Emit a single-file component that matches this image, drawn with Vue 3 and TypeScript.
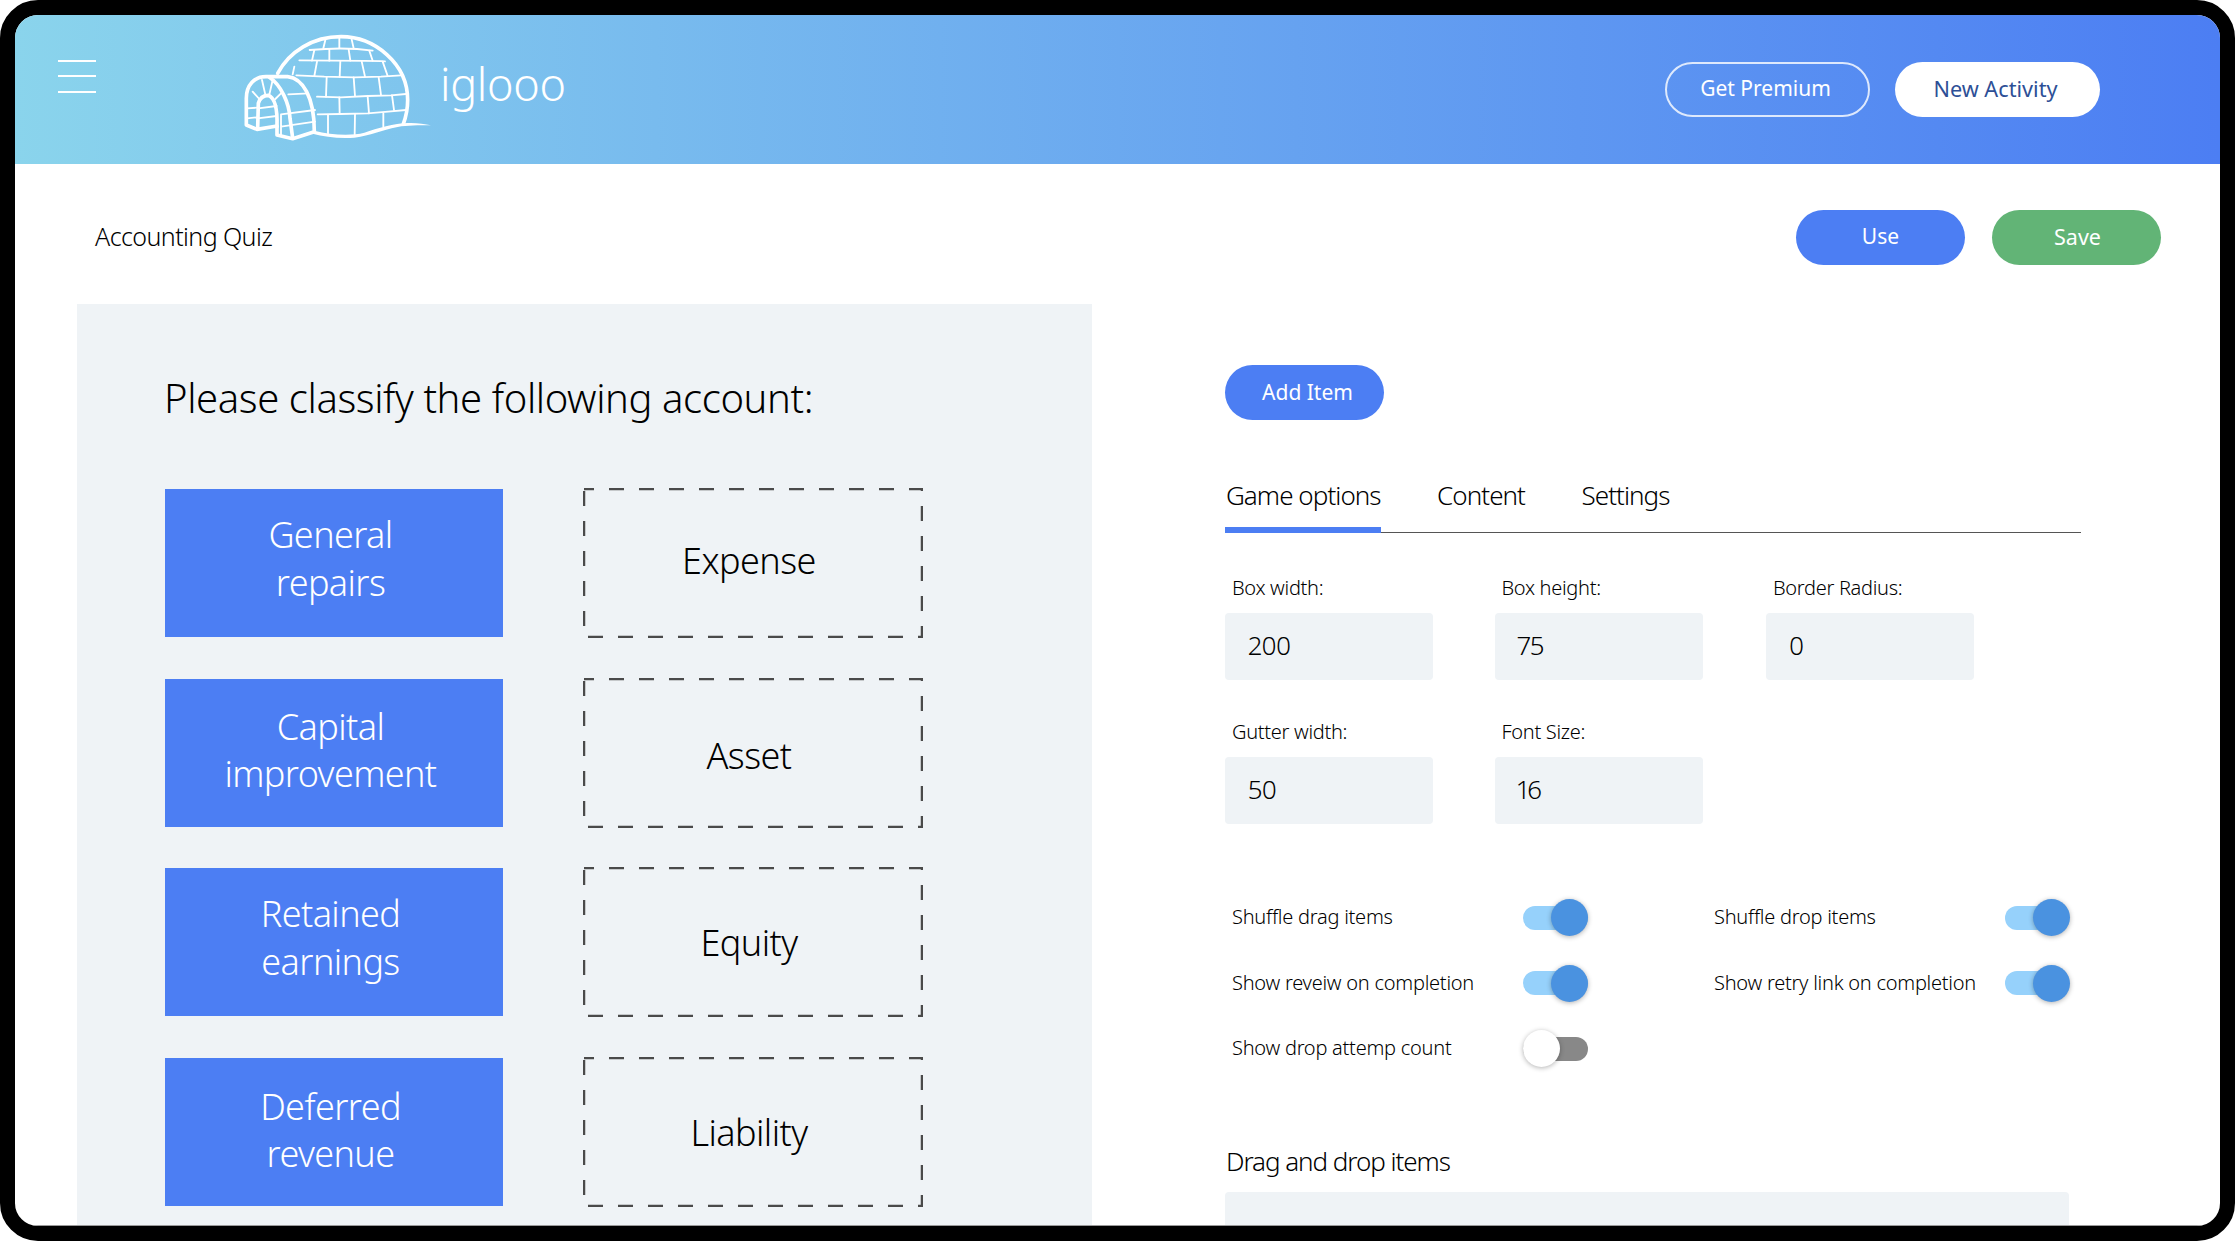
<script setup lang="ts">
const pairs = [
  { item: ['General', 'repairs'], zone: 'Expense', itemPad: 22, zoneTop: 0, zoneBottom: 6 },
  { item: ['Capital', 'improvement'], zone: 'Asset', itemPad: 24, zoneTop: 5, zoneBottom: 0 },
  { item: ['Retained', 'earnings'], zone: 'Equity', itemPad: 22, zoneTop: 1, zoneBottom: 0 },
  { item: ['Deferred', 'revenue'], zone: 'Liability', itemPad: 25, zoneTop: 1, zoneBottom: 0 },
]
const tabs = ['Game options', 'Content', 'Settings']
const fields = [
  { label: 'Box width:', value: '200' },
  { label: 'Box height:', value: '75' },
  { label: 'Border Radius:', value: '0' },
  { label: 'Gutter width:', value: '50' },
  { label: 'Font Size:', value: '16' },
]
const toggles = [
  { label: 'Shuffle drag items', on: true },
  { label: 'Shuffle drop items', on: true },
  { label: 'Show reveiw on completion', on: true },
  { label: 'Show retry link on completion', on: true },
  { label: 'Show drop attemp count', on: false },
]
</script>

<template>
  <div class="frame">
    <header class="header">
      <div class="burger"><i></i><i></i><i></i></div>
      <svg class="logo" viewBox="0 0 660 390" fill="none" stroke="#fff" stroke-linecap="round" stroke-linejoin="round">
        <g stroke-width="11">
          <path d="M140 160C175 95 245 50 330 50C430 50 530 130 530 240C530 265 525 290 517 312" />
          <path d="M46 315V235C46 195 70 170 105 170H170C215 175 250 230 250 335L185 356L138 345V318L78 328L46 315Z" />
          <path d="M115 172C150 195 175 250 177 295L185 354" />
          <path d="M80 325L82 250C87 232 100 226 112 226C128 232 140 255 138 320" />
        </g>
        <path d="M250 332C300 345 360 348 400 338C440 325 490 310 530 309C555 308 580 311 600 316C560 316 530 316 500 321C450 331 420 346 370 353C320 356 280 350 245 341Z" fill="#fff" stroke="none" />
        <g stroke-width="5.5">
          <path d="M236 90C300 84 370 84 425 92" />
          <path d="M205 121L300 122C360 122 420 122 462 124" />
          <path d="M196 166L280 170L370 172L450 170L510 166" />
          <path d="M258 230L330 232L410 228L480 226L525 222" />
          <path d="M260 283L330 282L410 280L480 274L525 270" />
          <path d="M283 60L277 85M325 55V84M362 58L368 85" />
          <path d="M250 90L243 122M295 88V122M353 88L358 122M415 92L425 122" />
          <path d="M258 125L250 168M328 124L326 170M392 124L402 170M455 125L470 168" />
          <path d="M190 140L185 163" />
          <path d="M287 172L285 230M368 172L372 228M443 172L450 225" />
          <path d="M325 232L326 282M410 230L414 280M483 226L489 270" />
          <path d="M291 285V340M372 283L371 346M457 280V320" />
          <path d="M65 215L85 237M93 180L103 224M125 180L115 224M150 220L133 237" />
          <path d="M48 265L78 263M48 295L78 292M82 265L137 258M80 295L137 288" />
          <path d="M172 223L232 220M150 283L252 270M150 320L252 305M150 285V345" />
        </g>
      </svg>
      <span class="brand">iglooo</span>
      <button class="pill ghost">Get Premium</button>
      <button class="pill white">New Activity</button>
    </header>

    <div class="titlebar">
      <span class="doc-title">Accounting Quiz</span>
      <button class="pill blue use">Use</button>
      <button class="pill green">Save</button>
    </div>

    <main class="main">
      <section class="preview">
        <h1 class="question">Please classify the following account:</h1>
        <div class="pairs">
          <template v-for="p in pairs" :key="p.zone">
            <div class="item" :style="{ paddingTop: p.itemPad + 'px' }">{{ p.item[0] }}<br />{{ p.item[1] }}</div>
            <div class="zone" :style="{ paddingTop: p.zoneTop + 'px', paddingBottom: p.zoneBottom + 'px' }">
              <svg class="dash" viewBox="0 0 340 150" fill="none">
                <rect x="1" y="1" width="338" height="148" stroke="#4a4a4a" stroke-width="2.5" stroke-dasharray="15 15" stroke-dashoffset="5" />
              </svg>
              {{ p.zone }}
            </div>
          </template>
        </div>
      </section>

      <section class="options">
        <button class="pill blue add">Add Item</button>
        <nav class="tabs">
          <span v-for="(t, i) in tabs" :key="t" class="tab" :class="{ active: i === 0 }">{{ t }}</span>
        </nav>
        <div class="fields">
          <label v-for="f in fields" :key="f.label" class="field">
            <span class="field-label">{{ f.label }}</span>
            <span class="input">{{ f.value }}</span>
          </label>
        </div>
        <div class="toggles">
          <div v-for="t in toggles" :key="t.label" class="toggle-row">
            <span class="toggle-label">{{ t.label }}</span>
            <span class="switch" :class="{ on: t.on }"><b></b></span>
          </div>
        </div>
        <h2 class="section-title">Drag and drop items</h2>
        <div class="items-box"></div>
      </section>
    </main>
  </div>
</template>

<style>
html, body { background: #fff; margin: 0; }
</style>

<style scoped>
.frame {
  box-sizing: border-box;
  width: 2235px;
  height: 1241px;
  border: 15px solid #000;
  border-radius: 38px;
  overflow: hidden;
  background: #fff;
  display: flex;
  flex-direction: column;
  font-family: "Noto Sans", sans-serif;
  font-weight: 300;
  color: #000;
}
.header {
  flex: none;
  height: 149px;
  display: flex;
  align-items: center;
  padding-left: 43px;
  background: linear-gradient(90deg, #8ad4ec 0%, #4c7ef3 100%);
}
.burger {
  width: 38px;
  height: 33px;
  margin-top: -27px;
  display: flex;
  flex-direction: column;
  justify-content: space-between;
}
.burger i { display: block; height: 2px; background: #fff; }
.logo { width: 220px; height: 130px; margin-left: 135px; margin-top: -10px; flex: none; }
.brand {
  color: #fff;
  font-size: 45px;
  line-height: 60px;
  letter-spacing: -0.3px;
  margin-left: -11px;
  margin-top: -12px;
  flex: 1;
}
.pill {
  box-sizing: border-box;
  height: 55px;
  border-radius: 28px;
  border: 0;
  padding: 0 0 3px;
  font: inherit;
  font-weight: 400;
  font-size: 21px;
  flex: none;
  text-align: center;
}
.ghost { width: 205px; background: transparent; border: 2px solid rgba(255, 255, 255, 0.8); color: #fff; padding-right: 4px; }
.white { width: 205px; background: #fff; color: #2d4f96; margin-left: 25px; margin-right: 120px; padding-right: 4px; font-size: 21.7px; }
.blue { background: #4c7ef3; color: #fff; }
.green { background: #62b476; color: #fff; width: 169px; margin-left: 27px; padding-left: 2px; font-size: 21.5px; }
.titlebar {
  flex: none;
  box-sizing: border-box;
  height: 140px;
  padding: 46px 59px 0 80px;
  display: flex;
  align-items: flex-start;
}
.doc-title { flex: 1; font-size: 25px; line-height: 52px; letter-spacing: -0.57px; }
.use { width: 169px; }
.main { flex: 1; min-height: 0; display: flex; overflow: hidden; border-bottom: 1px solid #9a9a9a; }
.preview {
  flex: none;
  box-sizing: border-box;
  width: 1015px;
  margin-left: 62px;
  padding: 67px 0 0 88px;
  background: #eff3f6;
}
.question { margin: 0; font-size: 40px; font-weight: 300; line-height: 54px; letter-spacing: -0.4px; margin-left: -1px; }
.pairs {
  margin-top: 64px;
  display: grid;
  grid-template-columns: 338px 340px;
  column-gap: 80px;
  grid-auto-rows: 148px;
  row-gap: 41.5px;
}
.item, .zone {
  text-align: center;
  font-size: 36px;
  box-sizing: border-box;
}
.item {
  background: #4c7ef3;
  color: #fff;
  line-height: 47.5px;
  padding-right: 7px;
  letter-spacing: -0.6px;
}
.zone {
  position: relative;
  display: flex;
  align-items: center;
  justify-content: center;
  padding-right: 8px;
  letter-spacing: -0.55px;
}
.dash { position: absolute; left: 0; top: -1px; width: 340px; height: 150px; }
.options { flex: 1; padding: 61px 0 0 133px; min-width: 0; }
.add { display: block; width: 159px; padding: 0 0 1px 6px; }
.tabs {
  margin-top: 57px;
  width: 856px;
  display: flex;
  gap: 55.5px;
  border-bottom: 1px solid #555;
  font-size: 26px;
  line-height: 36px;
  letter-spacing: -0.95px;
}
.tab { padding: 0 0 14px 1px; margin-bottom: -1px; border-bottom: 6px solid transparent; }
.tab.active { border-bottom-color: #4c7ef3; }
.fields {
  margin-top: 41px;
  display: grid;
  grid-template-columns: 269.5px 271.5px 208px;
  row-gap: 38px;
}
.field { display: block; width: 208px; }
.field-label { display: block; padding-left: 7px; font-size: 20px; line-height: 28px; letter-spacing: -0.3px; }
.input {
  display: block;
  margin-top: 11px;
  box-sizing: border-box;
  height: 67px;
  padding-left: 23px;
  line-height: 64px;
  font-size: 26px;
  font-variant-numeric: proportional-nums;
  letter-spacing: -0.6px;
  border-radius: 4px;
  background: #eff3f6;
}
.toggles {
  margin-top: 61px;
  display: grid;
  grid-template-columns: 482px 362px;
  grid-auto-rows: 65.5px;
}
.toggle-row { display: flex; align-items: center; padding-left: 7px; }
.toggle-label { width: 291px; flex: none; font-size: 20px; line-height: 28px; margin-top: -1px; letter-spacing: -0.25px; }
.switch {
  position: relative;
  display: block;
  width: 65px;
  height: 24px;
  border-radius: 12px;
  background: #888;
}
.switch.on { background: #96d1fb; }
.switch b {
  position: absolute;
  left: 0;
  top: -6.5px;
  width: 37px;
  height: 37px;
  border-radius: 50%;
  background: #fff;
  box-shadow: 0 1px 5px rgba(0, 0, 0, 0.3);
}
.switch.on b { left: 28px; background: #4a92e0; }
.section-title { margin: 61px 0 0 1px; font-size: 26px; font-weight: 300; line-height: 36px; letter-spacing: -1.05px; }
.items-box { margin-top: 13px; width: 844px; height: 60px; border-radius: 4px; background: #eff3f6; }
</style>
